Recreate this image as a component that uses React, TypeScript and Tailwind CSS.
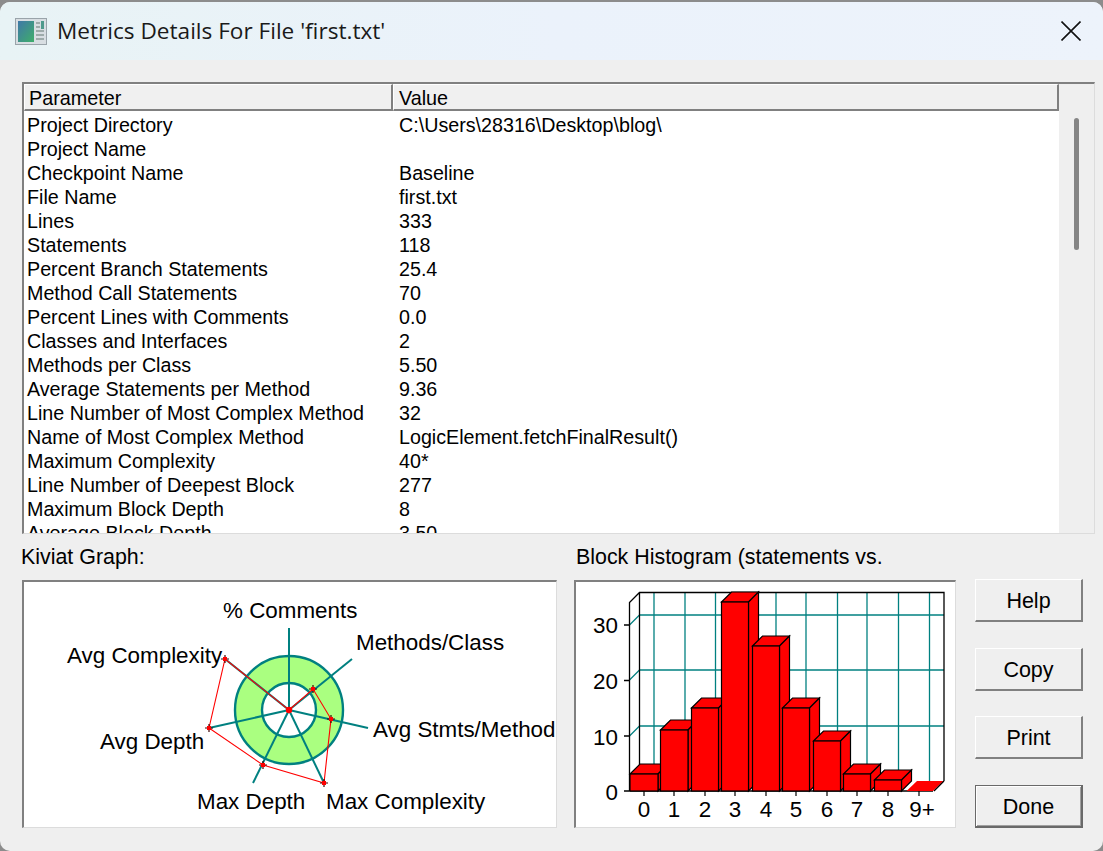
const rows: [string, string][] = [
  ["Project Directory", "C:\\Users\\28316\\Desktop\\blog\\"],
  ["Project Name", ""],
  ["Checkpoint Name", "Baseline"],
  ["File Name", "first.txt"],
  ["Lines", "333"],
  ["Statements", "118"],
  ["Percent Branch Statements", "25.4"],
  ["Method Call Statements", "70"],
  ["Percent Lines with Comments", "0.0"],
  ["Classes and Interfaces", "2"],
  ["Methods per Class", "5.50"],
  ["Average Statements per Method", "9.36"],
  ["Line Number of Most Complex Method", "32"],
  ["Name of Most Complex Method", "LogicElement.fetchFinalResult()"],
  ["Maximum Complexity", "40*"],
  ["Line Number of Deepest Block", "277"],
  ["Maximum Block Depth", "8"],
  ["Average Block Depth", "3.50"],
];

const spokes = [
  [289, 628],
  [352, 659],
  [368, 728],
  [324, 783],
  [253, 783],
  [209, 728],
  [225, 659],
];

const kiviatPoints = [
  [313, 689],
  [331, 719],
  [324, 783],
  [263, 765],
  [209, 728],
  [225, 659],
];

const kiviatLabels: [string, number, number][] = [
  ["% Comments", 223, 618],
  ["Methods/Class", 356, 650],
  ["Avg Stmts/Method", 373, 737],
  ["Max Complexity", 326, 809],
  ["Max Depth", 197, 809],
  ["Avg Depth", 100, 749],
  ["Avg Complexity", 67, 663],
];

const bars = [
  { x: 630, w: 28, top: 774, tick: 644, label: "0" },
  { x: 660.5, w: 27.5, top: 730, tick: 674, label: "1" },
  { x: 691.5, w: 27, top: 708, tick: 705, label: "2" },
  { x: 721.5, w: 27, top: 602, tick: 735, label: "3" },
  { x: 752.5, w: 27, top: 646, tick: 766, label: "4" },
  { x: 782.5, w: 27, top: 708, tick: 796, label: "5" },
  { x: 813.5, w: 27, top: 741, tick: 827, label: "6" },
  { x: 843.5, w: 27, top: 774, tick: 857, label: "7" },
  { x: 874.5, w: 27, top: 780, tick: 888, label: "8" },
];

function Kiviat() {
  const cx = 289;
  const cy = 710;
  const poly = [[cx, cy], ...kiviatPoints].map((p) => p.join(",")).join(" ");
  return (
    <svg width="535" height="248" viewBox="22 580 535 248" className="block">
      <circle cx={cx} cy={cy} r="54" fill="#aaff80" stroke="#008080" strokeWidth="2.4" />
      <circle cx={cx} cy={cy} r="27" fill="#ffffff" stroke="#008080" strokeWidth="2.4" />
      {spokes.map((s, i) => (
        <line key={i} x1={cx} y1={cy} x2={s[0]} y2={s[1]} stroke="#008080" strokeWidth="2" />
      ))}
      <polygon points={poly} fill="none" stroke="#ff0000" strokeWidth="1.1" />
      <circle cx={cx} cy={cy} r="3.2" fill="#ff0000" />
      {kiviatPoints.map((p, i) => (
        <path
          key={i}
          d={`M${p[0] - 4} ${p[1]}H${p[0] + 4}M${p[0]} ${p[1] - 4}V${p[1] + 4}`}
          stroke="#400000"
          strokeWidth="1.2"
        />
      ))}
      {kiviatPoints.map((p, i) => (
        <rect key={i} x={p[0] - 2} y={p[1] - 2} width="4" height="4" fill="#ff0000" />
      ))}
      {kiviatLabels.map(([t, x, y]) => (
        <text key={t} x={x} y={y} fontSize="22.4" fill="#000000" fontFamily="'Liberation Sans', Arial, sans-serif">
          {t}
        </text>
      ))}
    </svg>
  );
}

function Histogram() {
  const d = 10;
  const vertical = [654, 685, 715.5, 746, 776, 806, 837.5, 867, 898.5, 929.5];
  const horizontal = [615, 670, 726];
  return (
    <svg width="382" height="248" viewBox="574 580 382 248" className="block">
      {vertical.map((x) => (
        <line key={x} x1={x} y1="593" x2={x} y2="781" stroke="#008080" strokeWidth="1.3" />
      ))}
      {horizontal.map((y) => (
        <g key={y}>
          <line x1="639.5" y1={y} x2="944" y2={y} stroke="#008080" strokeWidth="1.3" />
          <line x1="629.5" y1={y + 10} x2="639.5" y2={y} stroke="#008080" strokeWidth="1.3" />
        </g>
      ))}
      <path d="M629.5 791V602.5L639.5 592.5H944V781M639.5 592.5V781" fill="none" stroke="#000000" strokeWidth="1.3" />
      <path d="M624 791H629.5M624 736H629.5M624 680.5H629.5M624 625H629.5" stroke="#000000" strokeWidth="1.3" />
      <line x1="629.5" y1="791" x2="933" y2="791" stroke="#000000" strokeWidth="1.3" />
      <polygon points="906.5,791 933,791 943.5,781 917,781" fill="#ff0000" />
      <path d="M934 791L944 781" stroke="#000000" strokeWidth="1.3" />
      {bars.map((b) => (
        <g key={b.label} stroke="#000000" strokeWidth="1.2" fill="#ff0000">
          <polygon points={`${b.x},${b.top} ${b.x + d},${b.top - d} ${b.x + b.w + d},${b.top - d} ${b.x + b.w},${b.top}`} />
          <polygon points={`${b.x + b.w},${b.top} ${b.x + b.w + d},${b.top - d} ${b.x + b.w + d},781 ${b.x + b.w},791`} />
          <rect x={b.x} y={b.top} width={b.w} height={791 - b.top} />
        </g>
      ))}
      {[...bars.map((b) => b.tick), 919].map((x) => (
        <line key={x} x1={x} y1="791" x2={x} y2="796" stroke="#000000" strokeWidth="1.2" />
      ))}
      {[...bars.map((b): [string, number] => [b.label, b.tick]), ["9+", 922] as [string, number]].map(([t, x]) => (
        <text key={t} x={x} y="817" fontSize="22.4" textAnchor="middle" fill="#000000" fontFamily="'Liberation Sans', Arial, sans-serif">
          {t}
        </text>
      ))}
      {[["30", 633], ["20", 689], ["10", 745], ["0", 800]].map(([t, y]) => (
        <text key={t} x="618" y={y} fontSize="22.4" textAnchor="end" fill="#000000" fontFamily="'Liberation Sans', Arial, sans-serif">
          {t}
        </text>
      ))}
    </svg>
  );
}

function DialogButton({ label, primary }: { label: string; primary?: boolean }) {
  return (
    <button
      className={
        primary
          ? "w-[108px] h-[43px] pt-[2px] bg-[#efefef] text-[21.5px] text-black border border-t-[#696969] border-l-[#696969] border-r-[2px] border-b-[2px] border-r-[#696969] border-b-[#696969] shadow-[inset_1px_1px_0_#fff,inset_-1px_-1px_0_#a0a0a0]"
          : "w-[108px] h-[43px] pt-[2px] bg-[#efefef] text-[21.5px] text-black border-t border-l border-t-white border-l-white border-r-[2px] border-b-[2px] border-r-[#808080] border-b-[#808080]"
      }
    >
      {label}
    </button>
  );
}

export default function App() {
  return (
    <div className="w-[1103px] h-[851px] bg-[#8c8c8c] pt-[2px] overflow-hidden font-['Liberation_Sans',Arial,sans-serif]">
      <div className="h-[849px] bg-[#efefef] rounded-[10px] overflow-hidden">
        <div className="h-[58px] flex items-center bg-gradient-to-r from-[#e8f3f5] via-[#ebf2fb] to-[#edf3fb] pl-[15px] pr-[22px]">
          <svg width="32" height="27" viewBox="0 0 32 27" className="shrink-0">
            <defs>
              <linearGradient id="ic" x1="0" y1="0" x2="1" y2="1">
                <stop offset="0" stopColor="#3f78a8" />
                <stop offset="1" stopColor="#3fae6a" />
              </linearGradient>
            </defs>
            <rect x="0.5" y="0.5" width="31" height="26" fill="#d8dee2" stroke="#9aa4aa" />
            <rect x="3" y="3" width="16" height="21" fill="url(#ic)" />
            <path d="M21 5h4M21 9h4M21 13h8M21 17h8M21 21h8" stroke="#8a9a98" strokeWidth="1.5" />
            <rect x="26" y="3" width="3" height="8" fill="#4f9a8c" />
          </svg>
          <div className="ml-[10px] text-[22.6px] text-[#1a1a1a] font-['Open_Sans',sans-serif]">
            Metrics Details For File 'first.txt'
          </div>
          <svg width="20" height="20" viewBox="0 0 20 20" className="ml-auto">
            <path d="M0.5 0.5L19.5 19.5M19.5 0.5L0.5 19.5" stroke="#111111" strokeWidth="1.6" />
          </svg>
        </div>

        <div className="pl-[22px] pt-[22px]">
          <div className="w-[1073px] h-[452px] flex border-t-[2px] border-l-[2px] border-t-[#808080] border-l-[#808080] border-b border-b-[#dcdcdc] border-r border-r-[#dcdcdc]">
            <div className="w-[1035px] h-full bg-white overflow-hidden">
              <div className="flex h-[27px] text-[19.8px] leading-[27px] text-black">
                <div className="w-[369px] bg-[#f0f0f0] pl-[4px] border-b-[2px] border-r-[2px] border-b-[#808080] border-r-[#808080] border-t border-l border-t-white border-l-white">
                  Parameter
                </div>
                <div className="flex-1 bg-[#f0f0f0] pl-[5px] border-b-[2px] border-r-[2px] border-b-[#808080] border-r-[#808080] border-t border-l border-t-white border-l-white">
                  Value
                </div>
              </div>
              <div className="pt-[2px] pl-[3px]">
                {rows.map(([name, value]) => (
                  <div key={name} className="flex h-[24px] text-[19.7px] leading-[24px] text-black whitespace-nowrap">
                    <div className="w-[372px]">{name}</div>
                    <div>{value}</div>
                  </div>
                ))}
              </div>
            </div>
            <div className="flex-1 flex justify-center pt-[34px]">
              <div className="w-[5px] h-[132px] bg-[#858585] rounded-full"></div>
            </div>
          </div>

          <div className="flex mt-[11px]">
            <div className="w-[535px]">
              <div className="h-[24px] leading-[24px] text-[21.4px] text-black -ml-[1px]">Kiviat Graph:</div>
              <div className="mt-[11px] w-[535px] h-[248px] bg-white border-t-[2px] border-l-[2px] border-t-[#808080] border-l-[#808080] border-b border-r border-b-[#dcdcdc] border-r-[#dcdcdc] overflow-hidden">
                <div className="-mt-[2px] -ml-[2px]">
                  <Kiviat />
                </div>
              </div>
            </div>
            <div className="w-[382px] ml-[17px]">
              <div className="h-[24px] leading-[24px] text-[21.4px] text-black pl-[2px] whitespace-nowrap">
                Block Histogram (statements vs.
              </div>
              <div className="mt-[11px] w-[382px] h-[248px] bg-white border-t-[2px] border-l-[2px] border-t-[#808080] border-l-[#808080] border-b border-r border-b-[#dcdcdc] border-r-[#dcdcdc] overflow-hidden">
                <div className="-mt-[2px] -ml-[2px]">
                  <Histogram />
                </div>
              </div>
            </div>
            <div className="ml-[19px] mt-[34px] h-[249px] flex flex-col justify-between">
              <DialogButton label="Help" />
              <DialogButton label="Copy" />
              <DialogButton label="Print" />
              <DialogButton label="Done" primary />
            </div>
          </div>
        </div>
      </div>
    </div>
  );
}
